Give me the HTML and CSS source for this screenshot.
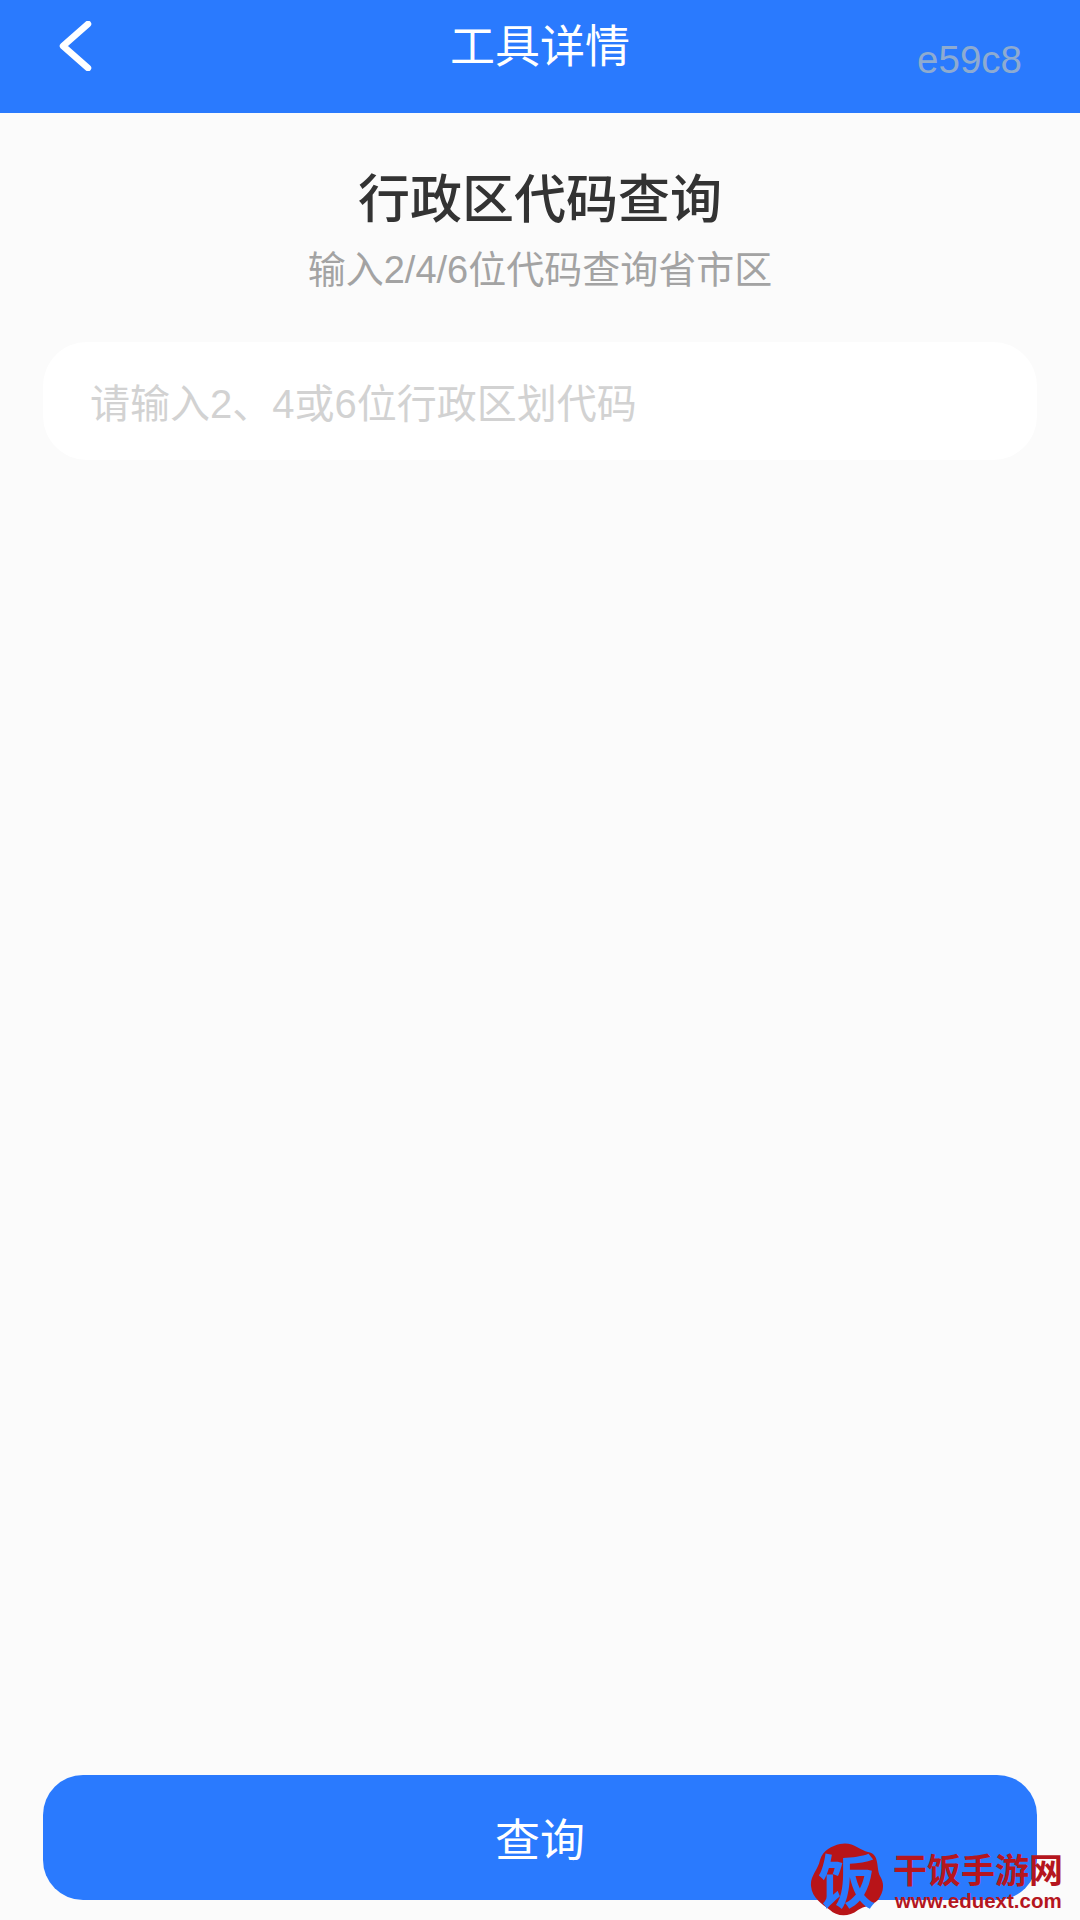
FILE: index.html
```html
<!DOCTYPE html>
<html lang="zh-CN">
<head>
<meta charset="utf-8">
<title>工具详情</title>
<link rel="stylesheet" href="styles.css">
</head>
<body>
<div class="page">
  <header class="topbar">
    <div class="back">
      <svg class="back-icon" width="36" height="50" viewBox="0 0 36 50"><path d="M31 3 L6 25 L31 47" fill="none" stroke="#fff" stroke-width="6.5" stroke-linecap="round" stroke-linejoin="round"/></svg>
    </div>
    <h1 class="topbar-title">工具详情</h1>
    <div class="topbar-id">e59c8</div>
  </header>
  <main class="content">
    <h2 class="tool-title">行政区代码查询</h2>
    <p class="tool-sub">输入2/4/6位代码查询省市区</p>
    <div class="field">请输入2、4或6位行政区划代码</div>
    <button class="submit">查询</button>
  </main>
  <div class="watermark">
    <div class="wm-logo">
      <svg width="76" height="76" viewBox="0 0 76 76"><path d="M30 2 C42 -1 50 8 58 10 C70 12 66 26 70 34 C76 44 72 52 68 58 C62 64 54 64 48 68 C38 76 26 74 20 68 C12 62 2 56 1 44 C0 34 8 28 10 18 C13 8 22 4 30 2 Z" fill="#b81418"/></svg>
      <span class="wm-glyph">饭</span>
    </div>
    <div class="wm-text">
      <div class="wm-name">干饭手游网</div>
      <div class="wm-url">www.eduext.com</div>
    </div>
  </div>
</div>
</body>
</html>
```
FILE: styles.css
```css
* { box-sizing: border-box; margin: 0; padding: 0; }
html, body { width: 1080px; height: 1920px; overflow: hidden; }
body { background: #fbfbfb; font-family: "Noto Sans CJK SC", "Liberation Sans", sans-serif; }
.page { position: relative; width: 1080px; height: 1920px; display: flex; flex-direction: column; }
.topbar { height: 113px; background: #2a7afe; display: grid; grid-template-columns: 1fr auto 1fr; align-items: start; flex: none; }
.back { padding: 21px 0 0 57px; }
.back-icon { display: block; }
.topbar-title { font-size: 45px; font-weight: 400; line-height: 60px; color: #fff; padding-top: 14px; }
.topbar-id { justify-self: end; padding: 37px 58px 0 0; font-family: "Liberation Sans", sans-serif; font-size: 38.5px; line-height: 46px; color: #8eabd0; }
.content { flex: 1; display: flex; flex-direction: column; align-items: center; padding: 0 43px 20px; }
.tool-title { margin-top: 46px; font-size: 52px; font-weight: 500; line-height: 74px; color: #333; }
.tool-sub { margin-top: 13px; font-size: 38px; line-height: 48px; color: #a3a3a3; font-family: "Liberation Sans", "Noto Sans CJK SC", sans-serif; }
.field { margin-top: 48px; width: 100%; height: 118px; background: #fff; border-radius: 44px; padding-left: 47px; display: flex; align-items: center; font-family: "Liberation Sans", "Noto Sans CJK SC", sans-serif; font-size: 40px; color: #d2d2d2; }
.submit { margin-top: auto; width: 100%; height: 125px; border: 0; border-radius: 40px; background: #2a7afe; color: #fff; font-family: inherit; font-size: 45px; }
.watermark { position: absolute; left: 810px; top: 1842px; display: flex; gap: 7px; }
.wm-logo { position: relative; width: 76px; height: 76px; }
.wm-logo svg { display: block; }
.wm-glyph { position: absolute; left: 8px; top: -4px; font-size: 58px; line-height: 80px; font-weight: 700; color: #2a7afe; }
.wm-text { padding-top: 9px; color: #b5161e; font-weight: 700; }
.wm-name { font-size: 34px; line-height: 36px; white-space: nowrap; }
.wm-url { margin-top: 3px; padding-left: 2px; font-family: "Liberation Sans", sans-serif; font-size: 20.5px; line-height: 21px; white-space: nowrap; }
```
